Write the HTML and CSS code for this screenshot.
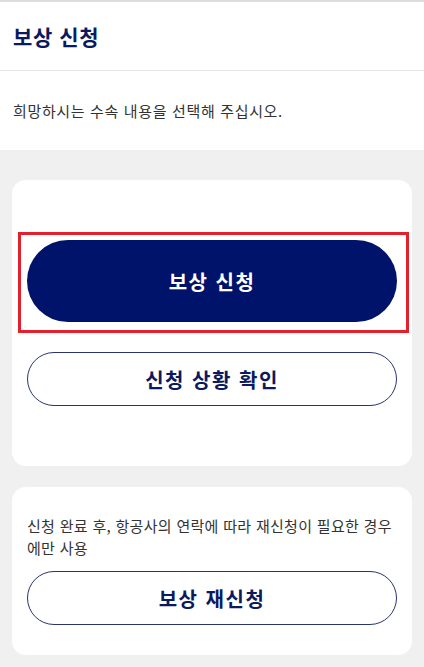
FILE: index.html
```html
<!DOCTYPE html>
<html lang="ko">
<head>
    <meta charset="UTF-8">
    <meta name="viewport" content="width=device-width, initial-scale=1.0">
    <title>보상 신청</title>
    <link rel="stylesheet" href="styles.css">
</head>
<body>
    <div class="page">
        <header class="header">
            <h1 class="title">보상 신청</h1>
        </header>
        <div class="intro">
            <p>희망하시는 수속 내용을 선택해 주십시오.</p>
        </div>
        <main class="content">
            <section class="card card-main">
                <div class="highlight">
                    <button type="button" class="btn btn-primary">보상 신청</button>
                </div>
                <button type="button" class="btn btn-outline">신청 상황 확인</button>
            </section>
            <section class="card card-retry">
                <p class="note">신청 완료 후, 항공사의 연락에 따라 재신청이 필요한 경우에만 사용</p>
                <button type="button" class="btn btn-outline">보상 재신청</button>
            </section>
        </main>
    </div>
</body>
</html>
```

FILE: styles.css
```css
* {
    box-sizing: border-box;
}
body {
    margin: 0;
    font-family: "Noto Sans CJK KR", "Noto Sans", sans-serif;
    background: #f0f0f0;
    color: #333;
}
p {
    margin: 0;
}
.page {
    min-height: 667px;
    background: #f0f0f0;
}
.header {
    background: #fff;
    border-top: 2px solid #dcdcdc;
    border-bottom: 1px solid #e6e6e6;
    height: 71px;
    display: flex;
    align-items: center;
    padding: 0 13px;
}
.title {
    margin: 0;
    font-size: 21px;
    font-weight: 700;
    letter-spacing: 0.6px;
    color: #0b1a5e;
}
.intro {
    background: #fff;
    height: 79px;
    display: flex;
    align-items: center;
    padding: 0 13px;
    font-size: 15px;
    letter-spacing: 0.65px;
    color: #333;
}
.content {
    padding: 30px 12px 12px;
    display: flex;
    flex-direction: column;
    gap: 21px;
}
.card {
    background: #fff;
    border-radius: 14px;
    padding: 0 15px;
}
.card-main {
    padding-top: 52px;
    padding-bottom: 60px;
}
.highlight {
    border: 3px solid #e3202b;
    margin: 0 -12px 19px -9px;
    padding: 5px 9px 8px 6px;
}
.card-retry {
    padding-top: 28px;
    padding-bottom: 30px;
}
.note {
    font-size: 15px;
    line-height: 22px;
    letter-spacing: 0.3px;
    word-break: break-all;
    color: #333;
    margin-bottom: 12px;
}
.btn {
    display: block;
    width: 100%;
    font-family: inherit;
    font-size: 20px;
    font-weight: 700;
    letter-spacing: 1.5px;
    border-radius: 999px;
    cursor: pointer;
}
.btn-primary {
    height: 82px;
    background: #00136b;
    color: #fff;
    border: none;
}
.btn-outline {
    height: 54px;
    background: #fff;
    color: #0b1a5e;
    border: 1px solid #2a3370;
}
```
